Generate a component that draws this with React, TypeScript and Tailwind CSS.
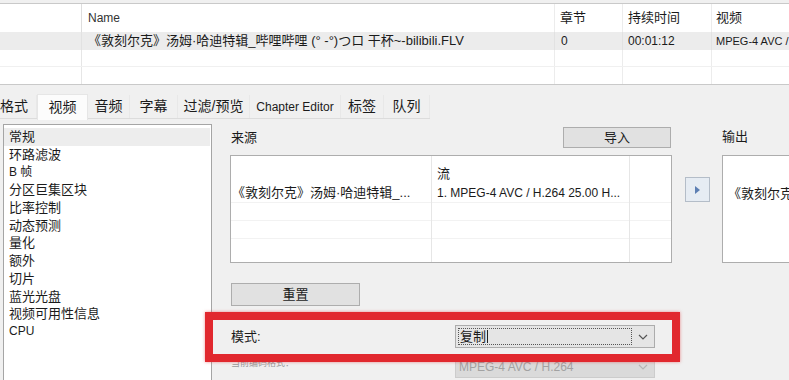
import React from "react";

const Chevron = ({ color = "#555" }: { color?: string }) => (
  <svg width="10" height="6" viewBox="0 0 10 6">
    <path d="M1 1 L5 5 L9 1" fill="none" stroke={color} strokeWidth="1.2" />
  </svg>
);

const tabs: { label: string; w: string; active?: boolean; left?: boolean }[] = [
  { label: "格式", w: "w-[37px]", left: true },
  { label: "视频", w: "w-[51px]", active: true },
  { label: "音频", w: "w-[42px]" },
  { label: "字幕", w: "w-[48px]" },
  { label: "过滤/预览", w: "w-[72px]" },
  { label: "Chapter Editor", w: "w-[91px]" },
  { label: "标签", w: "w-[43px]" },
  { label: "队列", w: "w-[46px]" },
];

const items = [
  "常规",
  "环路滤波",
  "B 帧",
  "分区巨集区块",
  "比率控制",
  "动态预测",
  "量化",
  "额外",
  "切片",
  "蓝光光盘",
  "视频可用性信息",
  "CPU",
];

export default function App() {
  return (
    <div className="relative w-[789px] h-[380px] overflow-hidden bg-[#f0f0f0] text-[#1b1b1b] font-['Liberation_Sans','Noto_Sans_CJK_SC',sans-serif]">
      {/* top file list */}
      <div className="mt-[3px] border-y border-[#c9c9c9] bg-white">
        {/* header */}
        <div className="flex h-[28px] items-center text-[13px]">
          <div className="w-[82px] shrink-0 h-full border-r border-[#dedede]" />
          <div className="w-[473px] shrink-0 h-full flex items-center pl-[6px] border-r border-[#ececec] text-[12px] text-[#333]">Name</div>
          <div className="w-[68px] shrink-0 h-full flex items-center pl-[5px] border-r border-[#ececec]">章节</div>
          <div className="w-[89px] shrink-0 h-full flex items-center pl-[5px] border-r border-[#ececec]">持续时间</div>
          <div className="flex-1 min-w-0 h-full flex items-center pl-[4px]">视频</div>
        </div>
        {/* row 1 */}
        <div className="flex h-[18px] items-center bg-[#ececec] text-[12px]">
          <div className="w-[82px] shrink-0 h-full border-r border-[#e2e2e2]" />
          <div className="w-[473px] shrink-0 h-full flex items-center pl-[6px] border-r border-[#e2e2e2] whitespace-nowrap overflow-hidden text-[13px]">《敦刻尔克》汤姆·哈迪特辑_哔哩哔哩 (° -°)つロ 干杯~-bilibili.FLV</div>
          <div className="w-[68px] shrink-0 h-full flex items-center pl-[6px] border-r border-[#e2e2e2]">0</div>
          <div className="w-[89px] shrink-0 h-full flex items-center pl-[5px] border-r border-[#e2e2e2]">00:01:12</div>
          <div className="flex-1 min-w-0 h-full flex items-center pl-[4px] whitespace-nowrap overflow-hidden text-[11px]">MPEG-4 AVC /</div>
        </div>
        {/* empty rows */}
        {[0, 1].map((r) => (
          <div key={r} className={`flex h-[17px] ${r === 0 ? "border-b border-[#f0f0f0]" : ""}`}>
            <div className="w-[82px] shrink-0 border-r border-[#e6e6e6]" />
            <div className="w-[473px] shrink-0 border-r border-[#ececec]" />
            <div className="w-[68px] shrink-0 border-r border-[#ececec]" />
            <div className="w-[89px] shrink-0 border-r border-[#ececec]" />
            <div className="flex-1" />
          </div>
        ))}
      </div>

      {/* tabs */}
      <div className="mt-[10px] flex h-[24px] text-[14px] border-b border-[#dcdcdc] w-[430px]">
        {tabs.map((t) => (
          <div
            key={t.label}
            className={`${t.w} shrink-0 flex items-center whitespace-nowrap ${t.left ? "justify-start" : "justify-center"} ${
              t.active ? "bg-[#fcfcfc] border-x border-t border-[#e6e6e6] -mt-[1px] h-[26px]" : "h-full border-r border-[#e8e8e8]"
            } ${t.label === "Chapter Editor" ? "text-[12px]" : ""}`}
          >
            {t.label}
          </div>
        ))}
      </div>

      {/* panel */}
      <div className="flex">
        {/* left list */}
        <div className="shrink-0 ml-[3px] mt-[5px] w-[209px] h-[300px] border border-[#a5a5a5] bg-white pt-[3px] text-[13px]">
          {items.map((it, i) => (
            <div
              key={it}
              className={`h-[17.7px] flex items-center pl-[5px] leading-none whitespace-nowrap ${i === 0 ? "bg-[#ededed] mr-[1px]" : ""} ${it === "B 帧" || it === "CPU" ? "text-[12px]" : ""}`}
            >
              {it}
            </div>
          ))}
        </div>

        {/* right pane */}
        <div className="flex-1 min-w-0 pl-[18px] flex flex-col text-[13px]">
          <div className="flex">
            {/* source */}
            <div className="w-[442px] shrink-0 flex flex-col">
              <div className="mt-[8px] h-[21px] flex items-center justify-between">
                <span className="pl-[1px]">来源</span>
                <div className="w-[108px] h-[21px] mr-[1px] bg-[#e1e1e1] border border-[#adadad] flex items-center justify-center">导入</div>
              </div>
              <div className="mt-[7px] h-[108px] border border-[#adadad] bg-white flex">
                <div className="w-[201px] shrink-0 border-r border-[#e6e6e6] flex flex-col">
                  <div className="h-[28px]" />
                  <div className="h-[19px] flex items-center pl-[1px] whitespace-nowrap border-b border-[#f2f2f2] text-[13px]">《敦刻尔克》汤姆·哈迪特辑_...</div>
                  <div className="h-[18px] border-b border-[#f2f2f2]" />
                  <div className="h-[18px] border-b border-[#f2f2f2]" />
                </div>
                <div className="w-[198px] shrink-0 border-r border-[#e6e6e6] flex flex-col">
                  <div className="h-[28px] flex items-end pb-[1px] pl-[5px]">流</div>
                  <div className="h-[19px] flex items-center pl-[5px] whitespace-nowrap text-[12px] border-b border-[#f2f2f2]">1. MPEG-4 AVC / H.264 25.00 H...</div>
                  <div className="h-[18px] border-b border-[#f2f2f2]" />
                  <div className="h-[18px] border-b border-[#f2f2f2]" />
                </div>
                <div className="flex-1 flex flex-col">
                  <div className="h-[28px]" />
                  <div className="h-[19px] border-b border-[#f2f2f2]" />
                  <div className="h-[18px] border-b border-[#f2f2f2]" />
                  <div className="h-[18px] border-b border-[#f2f2f2]" />
                </div>
              </div>
            </div>
            {/* arrow */}
            <div className="w-[50px] shrink-0 pt-[58px]">
              <div className="ml-[13px] w-[25px] h-[25px] border border-[#b4bdc8] bg-[#e6ecf3] flex items-center justify-center">
                <svg width="5" height="8" viewBox="0 0 5 8">
                  <path d="M0 0 L5 4 L0 8 Z" fill="#5d7fb3" />
                </svg>
              </div>
            </div>
            {/* output */}
            <div className="flex flex-col shrink-0">
              <div className="mt-[7px] h-[21px] flex items-center">输出</div>
              <div className="mt-[8px] h-[108px] w-[120px] border border-[#adadad] bg-white flex flex-col">
                <div className="h-[28px]" />
                <div className="h-[19px] flex items-center pl-[5px] whitespace-nowrap text-[13px]">《敦刻尔克</div>
              </div>
            </div>
          </div>

          {/* reset */}
          <div className="mt-[20px] ml-[1px] w-[129px] h-[23px] bg-[#e1e1e1] border border-[#adadad] flex items-center justify-center">重置</div>

          {/* mode */}
          <div className="mt-[19px] h-[23px] flex items-center">
            <div className="w-[225px] shrink-0 pl-[1px]">模式:</div>
            <div className="w-[200px] shrink-0 h-[23px] bg-[#e5e5e5] border border-[#acacac] flex items-stretch">
              <div className="flex-1 m-[2px] mr-0 border border-dotted border-[#555] flex items-center pl-[1px]">
                <span className="border-r border-[#222] pr-[1px] leading-none">复制</span>
              </div>
              <div className="w-[22px] flex items-center justify-center">
                <Chevron />
              </div>
            </div>
          </div>

          {/* codec */}
          <div className="mt-[7px] h-[23px] flex items-start">
            <div className="w-[225px] shrink-0 pl-[1px] text-[9px] text-[#9a9a9a] pt-[2px]">当前编码格式：</div>
            <div className="w-[200px] shrink-0 h-[23px] bg-[#dadada] border border-[#cccccc] flex items-center text-[#a2a2a2] text-[12px]">
              <div className="flex-1 pl-[3px]">MPEG-4 AVC / H.264</div>
              <div className="w-[22px] flex items-center justify-center">
                <Chevron color="#b5b5b5" />
              </div>
            </div>
          </div>
        </div>
      </div>

      {/* red annotation */}
      <div className="absolute left-[205px] top-[312px] w-[475px] h-[50px] border-[8px] border-[#e1282e] shadow-[0_0_3px_rgba(225,40,46,0.5)]" />
    </div>
  );
}
